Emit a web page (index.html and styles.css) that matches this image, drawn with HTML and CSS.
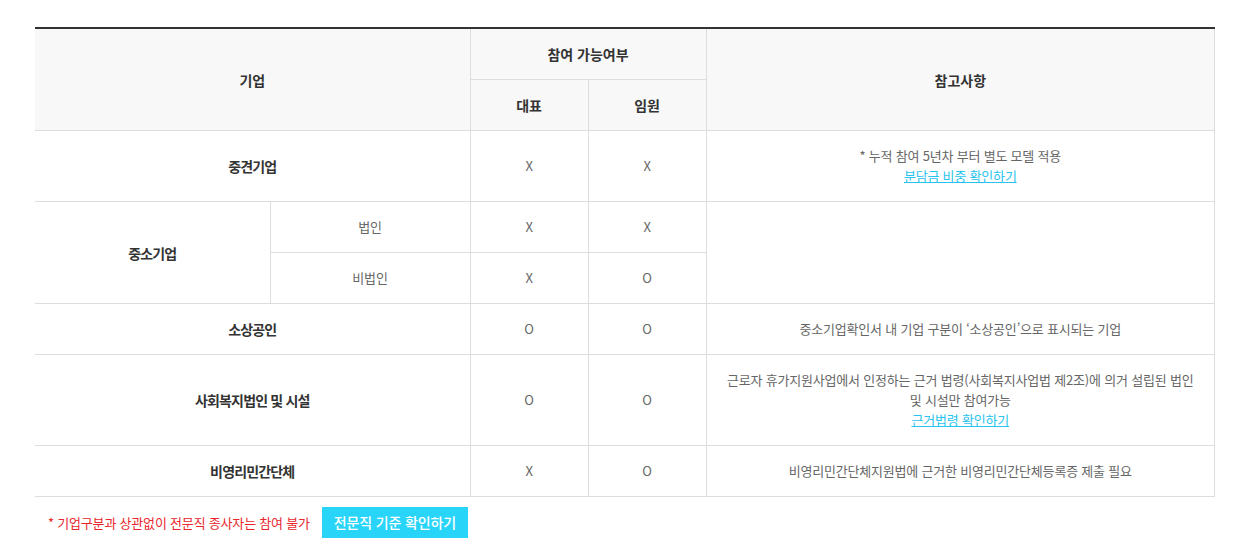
FILE: index.html
```html
<!DOCTYPE html>
<html lang="ko">
<head>
  <meta charset="UTF-8" />
  <title>참여 가능 기업</title>
  <link rel="stylesheet" href="styles.css">
</head>
<body>

  <div class="wrap">
    <table class="join-table">
      <colgroup>
        <col style="width: 235px">
        <col style="width: 200px">
        <col style="width: 118px">
        <col style="width: 118px">
        <col>
      </colgroup>
      <thead>
        <tr>
          <th colspan="2" rowspan="2" class="first">기업</th>
          <th colspan="2">참여 가능여부</th>
          <th rowspan="2">참고사항</th>
        </tr>
        <tr>
          <th>대표</th>
          <th>임원</th>
        </tr>
      </thead>
      <tbody>
        <tr>
          <td colspan="2" class="first name">중견기업</td>
          <td>X</td>
          <td>X</td>
          <td>* 누적 참여 5년차 부터 별도 모델 적용<br><a href="#">분담금 비중 확인하기</a></td>
        </tr>
        <tr>
          <td rowspan="2" class="first name">중소기업</td>
          <td>법인</td>
          <td>X</td>
          <td>X</td>
          <td rowspan="2"></td>
        </tr>
        <tr>
          <td>비법인</td>
          <td>X</td>
          <td>O</td>
        </tr>
        <tr>
          <td colspan="2" class="first name">소상공인</td>
          <td>O</td>
          <td>O</td>
          <td>중소기업확인서 내 기업 구분이 ‘소상공인’으로 표시되는 기업</td>
        </tr>
        <tr>
          <td colspan="2" class="first name">사회복지법인 및 시설</td>
          <td>O</td>
          <td>O</td>
          <td>근로자 휴가지원사업에서 인정하는 근거 법령(사회복지사업법 제2조)에 의거 설립된 법인<br>및 시설만 참여가능<br><a href="#">근거법령 확인하기</a></td>
        </tr>
        <tr>
          <td colspan="2" class="first name">비영리민간단체</td>
          <td>X</td>
          <td>O</td>
          <td>비영리민간단체지원법에 근거한 비영리민간단체등록증 제출 필요</td>
        </tr>
      </tbody>
    </table>

    <div class="notice">
      <p class="notice-text">* 기업구분과 상관없이 전문직 종사자는 참여 불가</p>
      <a href="#" class="btn-check">전문직 기준 확인하기</a>
    </div>
  </div>

</body>
</html>
```

FILE: styles.css
```css
body {
  margin: 0;
  padding: 27px 18px 0 35px;
  font-family: "Noto Sans CJK KR", "Noto Sans KR", sans-serif;
  color: #666;
  background: #fff;
}

.wrap {
  width: 1180px;
}

.join-table {
  width: 1180px;
  table-layout: fixed;
  border-collapse: collapse;
  border-top: 2px solid #333;
}

.join-table th,
.join-table td {
  border: 1px solid #ddd;
  text-align: center;
  vertical-align: middle;
}

.join-table th {
  height: 50px;
  padding: 0;
  background: #f8f8f8;
  color: #333;
  font-size: 14px;
  font-weight: bold;
}

.join-table td {
  padding: 15px 10px;
  font-size: 13px;
  line-height: 20px;
  letter-spacing: -0.015em;
  color: #666;
}

.join-table .first {
  border-left: none;
}

.join-table td.name {
  color: #333;
  font-weight: bold;
  font-size: 14px;
  letter-spacing: -0.06em;
}

.join-table a {
  color: #29c3ef;
  text-decoration: underline;
}

.notice {
  display: flex;
  align-items: center;
  margin-top: 10px;
  padding-left: 13px;
}

.notice-text {
  margin: 0;
  font-size: 13px;
  color: #e8262c;
  letter-spacing: -0.015em;
}

.btn-check {
  display: inline-block;
  margin-left: 12px;
  padding: 0 12px;
  height: 31px;
  line-height: 31px;
  background: #29d4f9;
  color: #fff;
  font-size: 14px;
  font-weight: 500;
  letter-spacing: -0.01em;
  text-decoration: none;
}
```
